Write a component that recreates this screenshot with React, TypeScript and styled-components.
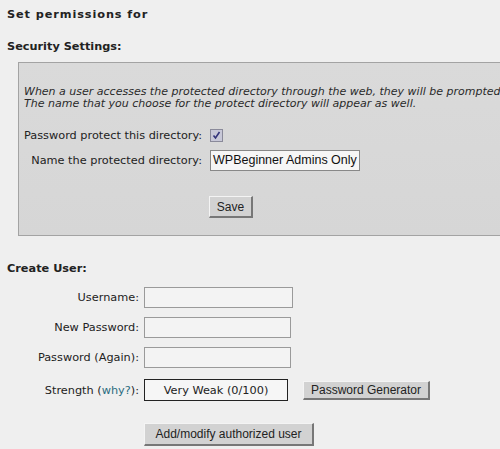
import styled, { createGlobalStyle } from "styled-components";

const Global = createGlobalStyle`
  html, body {
    margin: 0;
    padding: 0;
    background: #efefef;
    overflow: hidden;
  }
  body {
    font-family: "DejaVu Sans", Verdana, sans-serif;
    font-size: 11.3px;
    color: #222;
  }
`;

const Page = styled.div`
  width: 500px;
  height: 449px;
  padding-top: 8px;
  box-sizing: border-box;
  overflow: hidden;
`;

const Heading = styled.div<{ $top?: number; $spread?: number }>`
  font-weight: bold;
  font-size: 11.3px;
  line-height: 14px;
  margin-left: 7px;
  margin-top: ${(p) => p.$top ?? 0}px;
  letter-spacing: ${(p) => p.$spread ?? 0}px;
  color: #222;
`;

const Panel = styled.div`
  margin: 8px 0 0 18px;
  width: 520px;
  height: 174px;
  box-sizing: border-box;
  background: linear-gradient(#dadada, #d6d6d6);
  border: 1px solid #a3a3a3;
  padding: 23px 0 0 5px;
`;

const Note = styled.p`
  font-style: italic;
  font-size: 11px;
  margin: 0;
  line-height: 12px;
  white-space: nowrap;
  color: #2a2a2a;
`;

const PanelRow = styled.div<{ $top: number }>`
  display: flex;
  align-items: center;
  margin-top: ${(p) => p.$top}px;
`;

const PanelLabel = styled.div`
  width: 178px;
  text-align: right;
  padding-right: 8px;
  white-space: nowrap;
`;

const Check = styled.span`
  width: 11px;
  height: 11px;
  border: 1px solid #8a8a9a;
  background: #c8c8d8;
  display: flex;
  align-items: center;
  justify-content: center;
`;

const DirInput = styled.div`
  width: 146px;
  height: 19px;
  border: 1px solid #888;
  background: #f6f6f6;
  font-family: "Liberation Sans", Arial, sans-serif;
  font-size: 12.5px;
  line-height: 19px;
  padding-left: 2px;
  overflow: hidden;
  white-space: nowrap;
  color: #111;
`;

const Button = styled.div<{ $w: number; $h: number }>`
  width: ${(p) => p.$w}px;
  height: ${(p) => p.$h}px;
  box-sizing: border-box;
  background: #d2d2d2;
  border-top: 1px solid #f4f4f4;
  border-left: 1px solid #f4f4f4;
  border-right: 2px solid #777;
  border-bottom: 2px solid #777;
  font-family: "Liberation Sans", Arial, sans-serif;
  font-size: 12px;
  display: flex;
  align-items: center;
  justify-content: center;
  color: #222;
`;

const SaveRow = styled.div`
  margin: 25px 0 0 185px;
`;

const Form = styled.div`
  margin-top: 11px;
  display: grid;
  grid-template-columns: 144px auto;
  row-gap: 9px;
  align-items: center;
`;

const Label = styled.div`
  text-align: right;
  padding-right: 5px;
  white-space: nowrap;
`;

const Field = styled.div<{ $w: number }>`
  width: ${(p) => p.$w}px;
  height: 19px;
  border: 1px solid #9a9a9a;
  background: #f3f3f3;
`;

const Controls = styled.div`
  display: flex;
  align-items: center;
  gap: 15px;
  margin-top: 2px;
`;

const Meter = styled.div`
  width: 142px;
  height: 20px;
  border: 1px solid #222;
  background: #f6f6f6;
  display: flex;
  align-items: center;
  justify-content: center;
`;

const Why = styled.span`
  color: #2a6b80;
`;

const StrengthLabel = styled(Label)`
  margin-top: 2px;
`;

const AddRow = styled.div`
  margin: 22px 0 0 144px;
`;

export default function App() {
  return (
    <Page>
      <Global />
      <Heading $spread={0.9}>Set permissions for</Heading>
      <Heading $top={18}>Security Settings:</Heading>
      <Panel>
        <Note>When a user accesses the protected directory through the web, they will be prompted</Note>
        <Note>The name that you choose for the protect directory will appear as well.</Note>
        <PanelRow $top={19}>
          <PanelLabel>Password protect this directory:</PanelLabel>
          <Check>
            <svg width="9" height="9" viewBox="0 0 9 9">
              <path d="M1.5 4.5 L3.5 7 L7.5 1" fill="none" stroke="#33337a" strokeWidth="1.6" />
            </svg>
          </Check>
        </PanelRow>
        <PanelRow $top={8}>
          <PanelLabel>Name the protected directory:</PanelLabel>
          <DirInput>WPBeginner Admins Only</DirInput>
        </PanelRow>
        <SaveRow>
          <Button $w={44} $h={22}>Save</Button>
        </SaveRow>
      </Panel>
      <Heading $top={26}>Create User:</Heading>
      <Form>
        <Label>Username:</Label>
        <Field $w={147} />
        <Label>New Password:</Label>
        <Field $w={145} />
        <Label>Password (Again):</Label>
        <Field $w={145} />
        <StrengthLabel>
          Strength (<Why>why?</Why>):
        </StrengthLabel>
        <Controls>
          <Meter>Very Weak (0/100)</Meter>
          <Button $w={127} $h={19}>Password Generator</Button>
        </Controls>
      </Form>
      <AddRow>
        <Button $w={170} $h={23}>Add/modify authorized user</Button>
      </AddRow>
    </Page>
  );
}
